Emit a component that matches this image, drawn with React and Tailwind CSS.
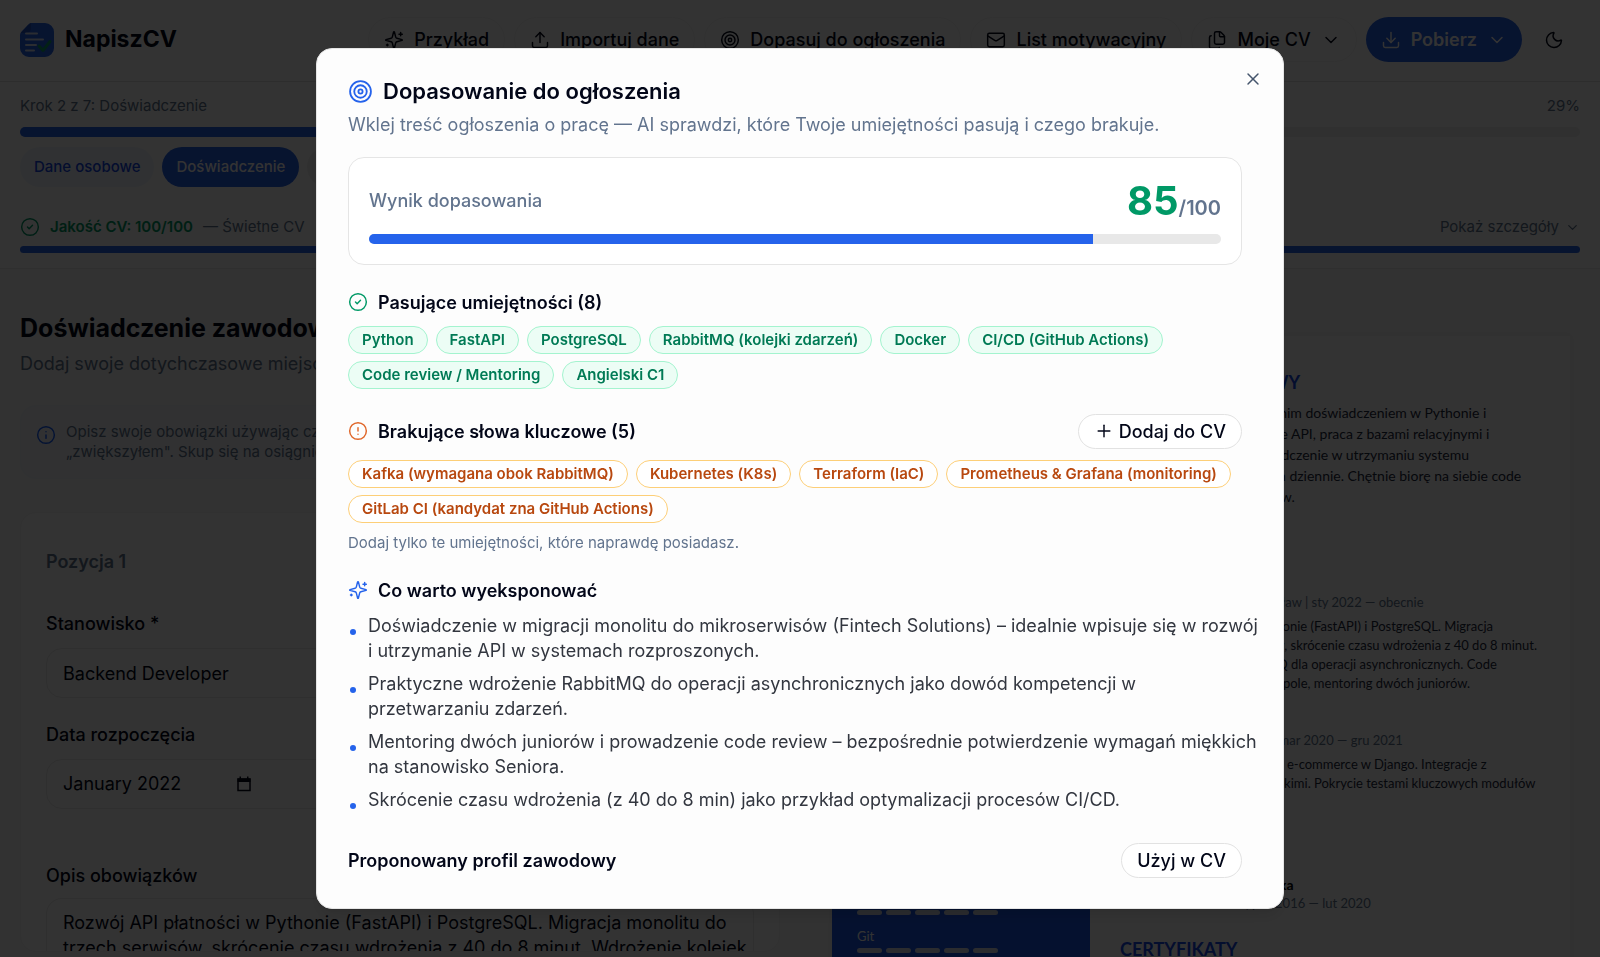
import {
  Upload, Target, Mail, Files, ChevronDown, Download, Moon,
  CircleCheck, CircleAlert, Info, Plus, X,
} from 'lucide-react';

function Sparkles({ className }) {
  return (
    <svg viewBox="0 0 24 24" className={className} fill="none" stroke="currentColor" strokeWidth="1.75" strokeLinecap="round" strokeLinejoin="round" aria-hidden="true">
      <path d="M9.937 15.5A2 2 0 0 0 8.5 14.063l-6.135-1.582a.5.5 0 0 1 0-.962L8.5 9.936A2 2 0 0 0 9.937 8.5l1.582-6.135a.5.5 0 0 1 .963 0L14.063 8.5A2 2 0 0 0 15.5 9.937l6.135 1.581a.5.5 0 0 1 0 .964L15.5 14.063a2 2 0 0 0-1.437 1.437l-1.582 6.135a.5.5 0 0 1-.963 0z" />
      <path d="M20 3v4M22 5h-4M4 17v2M5 18H3" />
    </svg>
  );
}

const NAV = [
  { label: 'Przykład',            icon: Sparkles },
  { label: 'Importuj dane',       icon: Upload },
  { label: 'Dopasuj do ogłoszenia', icon: Target },
  { label: 'List motywacyjny',    icon: Mail },
  { label: 'Moje CV',             icon: Files, menu: true },
];

const STEPS = [
  { label: 'Dane osobowe',  style: 'bg-blue-50 text-blue-700' },
  { label: 'Doświadczenie', style: 'bg-[#2563eb] text-white' },
  { label: 'Wykształcenie', style: 'bg-[#f0f0f0] text-slate-500' },
];

const MATCHED = [
  'Python', 'FastAPI', 'PostgreSQL', 'RabbitMQ (kolejki zdarzeń)', 'Docker',
  'CI/CD (GitHub Actions)', 'Code review / Mentoring', 'Angielski C1',
];

const MISSING = [
  'Kafka (wymagana obok RabbitMQ)', 'Kubernetes (K8s)', 'Terraform (IaC)',
  'Prometheus & Grafana (monitoring)', 'GitLab CI (kandydat zna GitHub Actions)',
];

const HIGHLIGHTS = [
  'Doświadczenie w migracji monolitu do mikroserwisów (Fintech Solutions) – idealnie wpisuje się w rozwój i utrzymanie API w systemach rozproszonych.',
  'Praktyczne wdrożenie RabbitMQ do operacji asynchronicznych jako dowód kompetencji w przetwarzaniu zdarzeń.',
  'Mentoring dwóch juniorów i prowadzenie code review – bezpośrednie potwierdzenie wymagań miękkich na stanowisko Seniora.',
  'Skrócenie czasu wdrożenia (z 40 do 8 min) jako przykład optymalizacji procesów CI/CD.',
];

const PROFILE = [
  'Backend developer z 5-letnim doświadczeniem w Pythonie i',
  'FastAPI oraz projektowanie API, praca z bazami relacyjnymi i',
  'kolejkami zdarzeń. Doświadczenie w utrzymaniu systemu',
  'obsługującego 2 mln żądań dziennie. Chętnie biorę na siebie code',
  'review i mentoring juniorów.',
];

const JOBS = [
  {
    title: 'Backend Developer',
    meta: 'Fintech Solutions S.A., Wrocław | sty 2022 — obecnie',
    lines: [
      'Rozwój API płatności w Pythonie (FastAPI) i PostgreSQL. Migracja',
      'monolitu do trzech serwisów, skrócenie czasu wdrożenia z 40 do 8 minut.',
      'Wdrożenie kolejek RabbitMQ dla operacji asynchronicznych. Code',
      'review oraz testy kodu w zespole, mentoring dwóch juniorów.',
    ],
  },
  {
    title: 'Python Developer',
    meta: 'Software House, Wrocław | mar 2020 — gru 2021',
    lines: [
      'Rozwój i utrzymanie aplikacji e-commerce w Django. Integracje z',
      'systemami płatności i kurierskimi. Pokrycie testami kluczowych modułów',
    ],
  },
];

const SKILLS = ['Docker', 'Git'];

function Logo() {
  return (
    <svg viewBox="0 0 34 34" className="size-[34px]" aria-hidden="true">
      <path d="M11 0h14a9 9 0 0 1 9 9v16a9 9 0 0 1-9 9H9a9 9 0 0 1-9-9V12q0-2 2-4l6-6q1.500-2 3-2z" fill="#2563eb" />
      <path d="M11 0v5q0 5-5 5H1l7-8z" fill="#1e4fc4" />
      <path d="M6 10.500h11M6 16.500h17M6 22h10M6 27.500h8" stroke="#d5dff5" strokeWidth="2" strokeLinecap="round" />
      <path d="M19 23l4 4.500 7-9" stroke="#10a36b" strokeWidth="3" fill="none" strokeLinecap="round" strokeLinejoin="round" />
    </svg>
  );
}

function Header() {
  return (
    <header className="flex h-[82px] items-center justify-between border-b border-[#e2e2e2] bg-white pr-6 pb-[2px] pl-5">
      <a href="#" className="flex items-center gap-[11px] text-[23px] font-bold">
        <Logo />
        NapiszCV
      </a>
      <nav className="flex items-center gap-[9px]">
        {NAV.map(({ label, icon: Icon, menu }) => (
          <button key={label} type="button" className="flex h-[45px] items-center gap-[10px] rounded-full border border-[#f4f4f4] px-[15px] text-lg font-medium whitespace-nowrap">
            <Icon className="size-5" strokeWidth={1.75} />
            {label}
            {menu && <ChevronDown className="size-5" strokeWidth={1.75} />}
          </button>
        ))}
        <button type="button" className="flex h-[45px] items-center gap-[10px] rounded-full bg-[#2563eb] px-[15px] text-lg font-semibold text-white">
          <Download className="size-5" strokeWidth={1.75} />
          Pobierz
          <ChevronDown className="size-5" strokeWidth={1.75} />
        </button>
        <button type="button" aria-label="Tryb ciemny" className="flex size-[45px] items-center justify-center rounded-full">
          <Moon className="size-5" strokeWidth={1.75} />
        </button>
      </nav>
    </header>
  );
}

function Progress() {
  return (
    <section className="border-b border-[#e9e9e9] bg-white px-5 pt-[14px] pb-[15px] text-[15px] text-slate-500">
      <div className="flex justify-between leading-5">
        <span>Krok 2 z 7: Doświadczenie</span>
        <span>29%</span>
      </div>
      <div className="mt-[11px] h-[10px] overflow-hidden rounded-full bg-[#f0f0f0]">
        <div className="h-full w-[29%] bg-[#2563eb]" />
      </div>
      <div className="mt-[10px] flex gap-2">
        {STEPS.map(s => (
          <button key={s.label} type="button" className={`h-10 rounded-full px-[14px] font-medium ${s.style}`}>
            {s.label}
          </button>
        ))}
      </div>
      <div className="mt-[30px] flex items-center justify-between leading-5">
        <p className="flex items-center gap-[10px]">
          <CircleCheck className="size-5 text-emerald-600" strokeWidth={1.75} />
          <span className="font-semibold text-emerald-600">Jakość CV: 100/100</span>
          <span>— Świetne CV</span>
        </p>
        <button type="button" className="flex items-center gap-[6px]">
          Pokaż szczegóły
          <ChevronDown className="size-[15px]" />
        </button>
      </div>
      <div className="mt-[9px] h-[7px] rounded-full bg-[#2563eb]" />
    </section>
  );
}

function ExperienceForm() {
  return (
    <section className="min-w-0 pt-11">
      <h2 className="text-[25px] leading-[30px] font-bold">Doświadczenie zawodowe</h2>
      <p className="mt-2 text-lg leading-[25px] text-slate-500">Dodaj swoje dotychczasowe miejsca pracy</p>
      <div className="mt-[29px] flex gap-[10px] rounded-2xl border border-[#f0f4fa] bg-[#f2f6fb] px-[15px] py-4 text-[15px] leading-5 text-slate-500">
        <Info className="mt-[3px] size-5 shrink-0 text-blue-600" strokeWidth={1.75} />
        <p>
          Opisz swoje obowiązki używając czasowników: „wdrożyłem",<br />
          „zwiększyłem". Skup się na osiągnięciach.
        </p>
      </div>
      <div className="mt-[33px] rounded-2xl border border-[#f4f4f4] bg-white px-[25px] pt-9">
        <h3 className="text-lg leading-[25px] font-semibold text-slate-500">Pozycja 1</h3>
        <label htmlFor="role" className="mt-[37px] block text-lg leading-[25px] font-medium">Stanowisko *</label>
        <input id="role" defaultValue="Backend Developer" className="mt-3 block h-[50px] w-full rounded-2xl border border-[#e9e9e9] px-4 text-lg" />
        <label htmlFor="start" className="mt-6 block text-lg leading-[25px] font-medium">Data rozpoczęcia</label>
        <div className="mt-3 flex h-[50px] items-center rounded-2xl border border-[#e9e9e9] px-4 text-lg">
          <input id="start" defaultValue="January 2022" className="w-[172px]" />
          <svg viewBox="0 0 18 18" className="size-[18px]" aria-hidden="true">
            <path d="M3 4h12v11.500H3z" fill="none" stroke="currentColor" strokeWidth="1.500" />
            <path d="M2.500 3.500h13V7h-13zM4.500 1.500h1.500v2H4.500zM12 1.500h1.500v2H12z" fill="currentColor" />
          </svg>
        </div>
        <label htmlFor="duties" className="mt-[54px] block text-lg leading-[25px] font-medium">Opis obowiązków</label>
        <textarea
          id="duties"
          defaultValue="Rozwój API płatności w Pythonie (FastAPI) i PostgreSQL. Migracja monolitu do trzech serwisów, skrócenie czasu wdrożenia z 40 do 8 minut. Wdrożenie kolejek RabbitMQ."
          className="mt-[10px] block h-[53px] w-full resize-none overflow-hidden rounded-t-2xl border border-b-0 border-[#e9e9e9] pt-[11px] pr-0 pl-4 text-lg leading-[25px]"
        />
      </div>
    </section>
  );
}

function CvPreview() {
  return (
    <section className="min-w-0 px-[10px] pt-[67px]">
      <div className="ml-[2px] flex h-[1050px] bg-white font-[Lato,sans-serif] shadow-[0_0_8px_rgba(0,0,0,0.05)]">
        <aside className="w-[258px] shrink-0 bg-[#1a56e8] px-[25px] pt-[554px] text-[13px] leading-4 text-white">
          {SKILLS.map(s => (
            <div key={s} className="mb-[13px]">
              <p>{s}</p>
              <div className="mt-1 flex gap-1">
                {[1, 2, 3, 4, 5].map(n => <span key={n} className="h-[5px] w-[25px] rounded-full bg-[#d4dbe8]" />)}
              </div>
            </div>
          ))}
        </aside>
        <div className="pt-9 pl-[30px] text-[13px] leading-[19px] whitespace-nowrap text-slate-800">
          <h3 className="text-lg leading-5 font-bold text-blue-700">PROFIL ZAWODOWY</h3>
          <div className="mt-[10px] text-[14px] leading-[21px]">
            {PROFILE.map(l => <p key={l}>{l}</p>)}
          </div>
          <h3 className="mt-[43px] text-lg leading-5 font-bold text-blue-700">DOŚWIADCZENIE</h3>
          {JOBS.map(j => (
            <article key={j.title} className="mb-[15px] pt-1">
              <h4 className="text-[14px] font-bold text-black">{j.title}</h4>
              <p className="text-slate-500">{j.meta}</p>
              <div className="mt-[5px]">
                {j.lines.map(l => <p key={l}>{l}</p>)}
              </div>
            </article>
          ))}
          <h3 className="mt-[42px] text-lg leading-5 font-bold text-blue-700">WYKSZTAŁCENIE</h3>
          <h4 className="mt-5 text-[14px] font-bold text-black">Studia dzienne, Informatyka</h4>
          <p className="text-slate-500">Politechnika Lubelska | paź 2016 — lut 2020</p>
          <h3 className="mt-[26px] text-lg leading-5 font-bold text-blue-700">CERTYFIKATY</h3>
        </div>
      </div>
    </section>
  );
}

function Chips({ items, tone }) {
  return (
    <ul className="mt-[11px] flex flex-wrap gap-x-2 gap-y-[7px]">
      {items.map(i => (
        <li key={i} className={`rounded-full border px-[13px] text-[15px] leading-[26px] font-semibold ${tone}`}>{i}</li>
      ))}
    </ul>
  );
}

function MatchDialog() {
  return (
    <div className="fixed inset-0 flex items-center justify-center bg-black/80">
      <div role="dialog" aria-labelledby="match-title" className="relative h-[90vh] w-full max-w-[968px] overflow-hidden rounded-2xl border border-[#e5e5e5] bg-[#fdfdfd] pt-[30px] pr-[41px] pl-[31px] text-lg leading-[25px] shadow-lg">
        <button type="button" aria-label="Zamknij" className="absolute top-5 right-5 text-slate-600">
          <X className="size-5" strokeWidth={1.75} />
        </button>

        <h2 id="match-title" className="flex items-center gap-[10px] text-[22px] leading-[25px] font-semibold">
          <Target className="size-[25px] text-[#2563eb]" strokeWidth={1.75} />
          Dopasowanie do ogłoszenia
        </h2>
        <p className="mt-2 text-slate-500">
          Wklej treść ogłoszenia o pracę — AI sprawdzi, które Twoje umiejętności pasują i czego brakuje.
        </p>

        {/* Score */}
        <div className="mt-5 rounded-2xl border border-[#e5e5e5] bg-white p-5">
          <div className="flex items-center justify-between">
            <span className="font-medium text-slate-500">Wynik dopasowania</span>
            <p className="text-[40px] leading-[46px] font-bold text-emerald-600">
              85<span className="text-xl font-semibold text-slate-500">/100</span>
            </p>
          </div>
          <div className="mt-[10px] h-[10px] overflow-hidden rounded-full bg-[#e8e8e8]">
            <div className="h-full w-[85%] bg-[#2563eb]" />
          </div>
        </div>

        {/* Matched skills */}
        <h3 className="mt-[25px] flex items-center gap-[10px] font-semibold">
          <CircleCheck className="size-5 text-emerald-600" strokeWidth={1.75} />
          Pasujące umiejętności (8)
        </h3>
        <Chips items={MATCHED} tone="border-emerald-200 bg-emerald-50 text-emerald-700" />

        {/* Missing keywords */}
        <div className="mt-[25px] flex items-center justify-between">
          <h3 className="flex items-center gap-[10px] font-semibold">
            <CircleAlert className="size-5 text-[#e0672a]" strokeWidth={1.75} />
            Brakujące słowa kluczowe (5)
          </h3>
          <button type="button" className="flex h-[35px] items-center gap-[5px] rounded-full border border-[#e2e2e2] bg-white px-[15px] font-medium">
            <Plus className="size-5" strokeWidth={1.75} />
            Dodaj do CV
          </button>
        </div>
        <Chips items={MISSING} tone="border-[#fdcf78] bg-white text-[#b8480f]" />
        <p className="mt-[10px] text-[15px] leading-5 text-slate-500">Dodaj tylko te umiejętności, które naprawdę posiadasz.</p>

        {/* Highlights */}
        <h3 className="mt-[25px] flex items-center gap-[10px] font-semibold">
          <Sparkles className="size-5 text-[#2563eb]" />
          Co warto wyeksponować
        </h3>
        <ul className="mt-[10px] -mr-[19px] space-y-2 text-[#32363f]">
          {HIGHLIGHTS.map(h => (
            <li key={h} className="flex gap-[12px]">
              <span className="mt-4 ml-[2px] size-[6px] shrink-0 rounded-full bg-[#2563eb]" />
              {h}
            </li>
          ))}
        </ul>

        <div className="mt-[31px] flex items-center justify-between">
          <h3 className="font-semibold">Proponowany profil zawodowy</h3>
          <button type="button" className="h-[35px] rounded-full border border-[#e2e2e2] bg-white px-[15px] font-medium">Użyj w CV</button>
        </div>
      </div>
    </div>
  );
}

export default function App() {
  return (
    <div className="h-screen overflow-hidden bg-[#f8f8f8] font-[Inter,sans-serif] text-slate-950">
      <Header />
      <Progress />
      <main className="grid grid-cols-2 gap-10 px-5">
        <ExperienceForm />
        <CvPreview />
      </main>
      <MatchDialog />
    </div>
  );
}
